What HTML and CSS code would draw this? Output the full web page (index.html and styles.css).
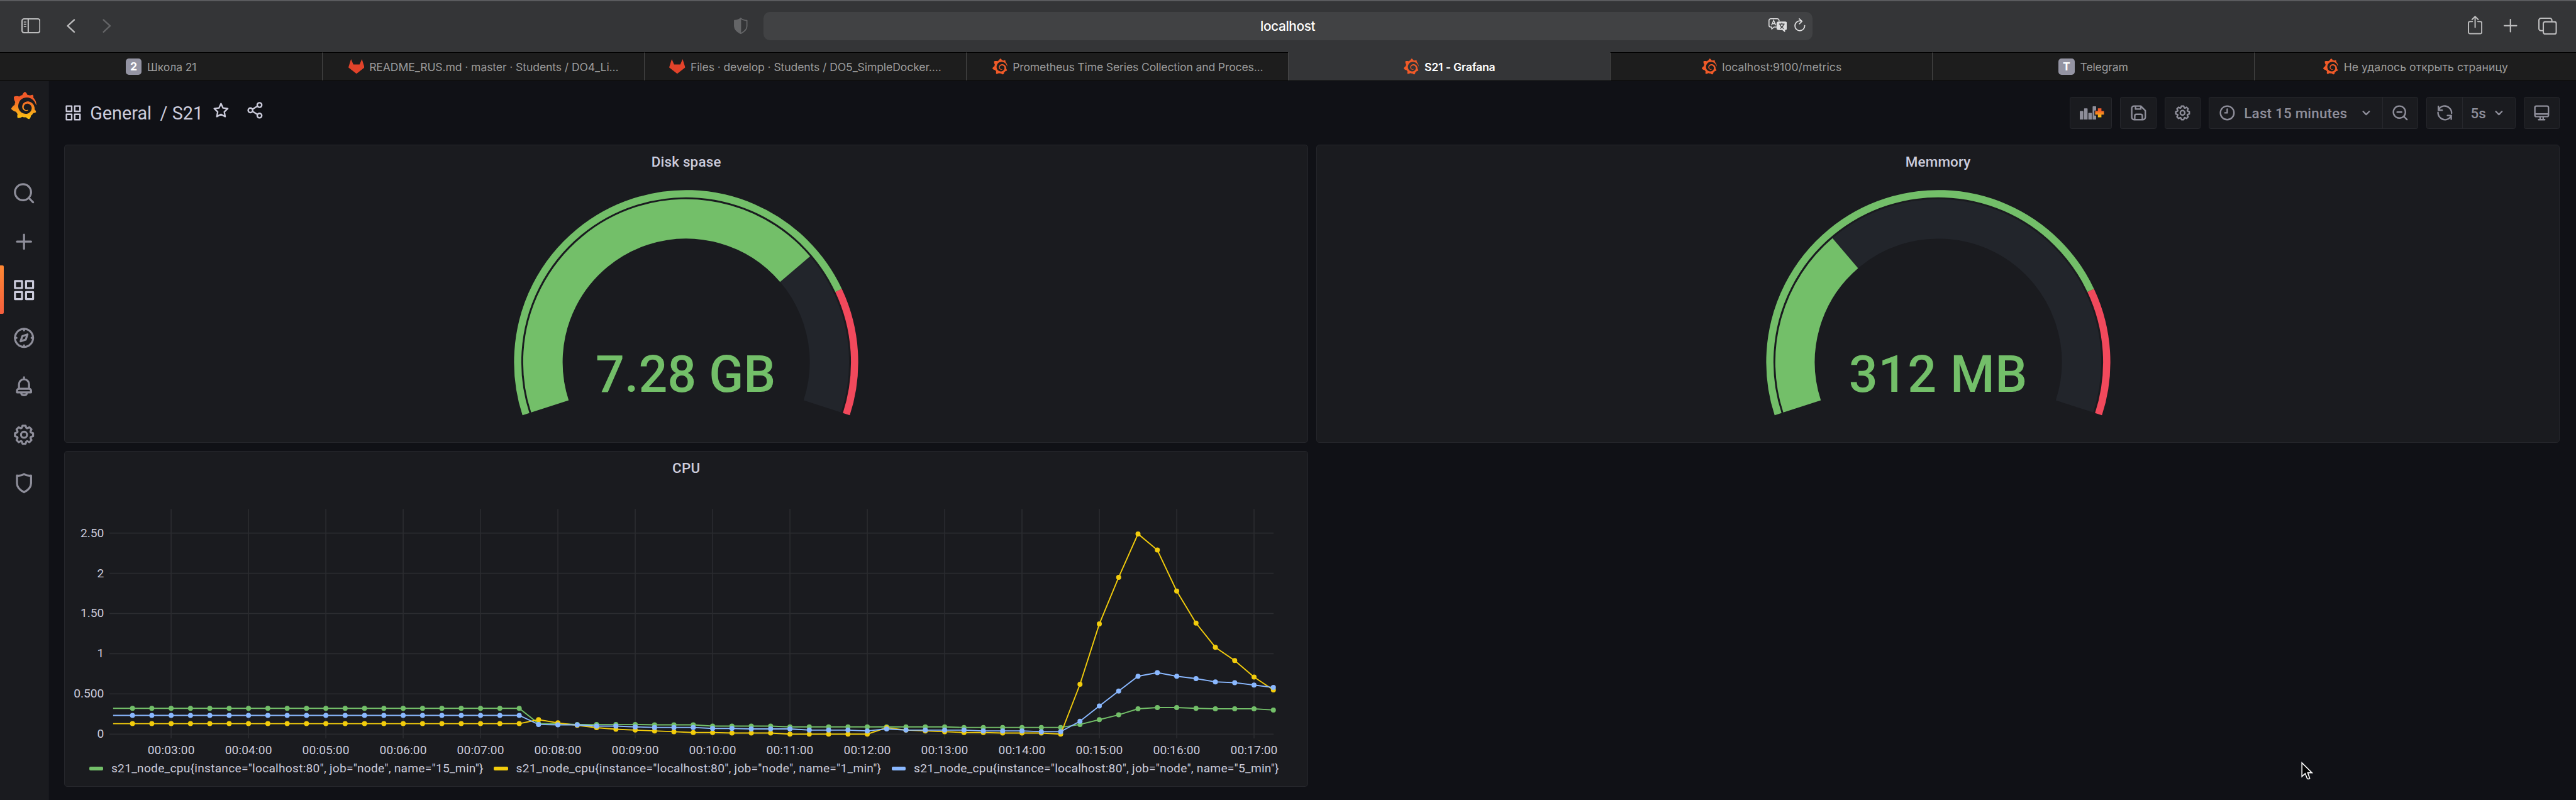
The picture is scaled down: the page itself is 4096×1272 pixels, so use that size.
FILE: index.html
```html
<!DOCTYPE html>
<html lang="ru">
<head>
<meta charset="utf-8">
<title>S21 - Grafana</title>
<link rel="stylesheet" href="styles.css">
</head>
<body>
<svg class="defs" aria-hidden="true">
  <defs>
    <linearGradient id="flame" x1="0" y1="1" x2="0" y2="0"><stop offset="0" stop-color="#fcc80f"/><stop offset=".25" stop-color="#f9a51c"/><stop offset=".75" stop-color="#f15a29"/><stop offset="1" stop-color="#f15a29"/></linearGradient>
    <symbol id="grafana" viewBox="0.95 0 22.1 24"><path d="M23.02 10.59a8.578 8.578 0 0 0-.862-3.034 8.911 8.911 0 0 0-1.789-2.445c.337-1.342-.413-2.505-.413-2.505-1.292-.08-2.113.4-2.416.62-.052-.02-.102-.044-.154-.064-.22-.089-.446-.172-.677-.247-.231-.073-.47-.14-.711-.197a9.867 9.867 0 0 0-.875-.161C14.557.753 12.94 0 12.94 0c-1.804 1.145-2.147 2.744-2.147 2.744l-.018.093c-.098.029-.2.057-.298.088-.138.042-.275.094-.413.143-.138.055-.275.107-.41.166a8.869 8.869 0 0 0-1.557.87l-.063-.029c-2.497-.955-4.716.195-4.716.195-.203 2.658.996 4.33 1.235 4.636a11.608 11.608 0 0 0-.607 2.635C1.636 12.677.953 15.014.953 15.014c1.926 2.214 4.171 2.351 4.171 2.351.003-.002.006-.002.006-.005.285.509.615.994.986 1.446.156.19.32.371.488.548-.704 2.009.099 3.68.099 3.68 2.144.08 3.553-.937 3.849-1.173a9.784 9.784 0 0 0 3.164.501h.08l.055-.003.107-.002.103-.005.003.002c1.01 1.44 2.788 1.646 2.788 1.646 1.264-1.332 1.337-2.653 1.337-2.94v-.058c0-.02-.003-.039-.003-.06.265-.187.52-.387.758-.6a7.875 7.875 0 0 0 1.415-1.7c1.43.083 2.437-.885 2.437-.885-.236-1.49-1.085-2.216-1.264-2.354l-.018-.013-.016-.013a.217.217 0 0 1-.031-.02c.008-.092.016-.18.02-.27.011-.162.016-.323.016-.48v-.253l-.005-.098-.008-.135a1.891 1.891 0 0 0-.01-.13c-.003-.042-.008-.083-.013-.125l-.016-.124-.018-.122a6.215 6.215 0 0 0-2.032-3.73 6.015 6.015 0 0 0-3.222-1.46 6.292 6.292 0 0 0-.85-.048l-.107.002h-.063l-.044.003-.104.008a4.777 4.777 0 0 0-3.335 1.695c-.332.4-.592.84-.768 1.297a4.594 4.594 0 0 0-.312 1.817l.003.091c.005.055.007.11.013.164a3.615 3.615 0 0 0 .698 1.82 3.53 3.53 0 0 0 1.827 1.282c.33.098.66.14.971.137.039 0 .078 0 .114-.002l.063-.003c.02 0 .041-.003.062-.003.034-.002.065-.007.099-.01.007 0 .018-.003.028-.003l.031-.005.06-.008a1.18 1.18 0 0 0 .112-.02c.036-.008.072-.013.109-.024a2.634 2.634 0 0 0 .914-.415c.028-.02.056-.041.085-.065a.248.248 0 0 0 .039-.35.244.244 0 0 0-.309-.06l-.078.042c-.09.044-.184.083-.283.116a2.476 2.476 0 0 1-.475.096c-.028.003-.054.006-.083.006l-.083.002c-.026 0-.054 0-.08-.002l-.102-.006h-.012l-.024.006c-.016-.003-.031-.003-.044-.006-.031-.002-.06-.007-.091-.01a2.59 2.59 0 0 1-.724-.213 2.557 2.557 0 0 1-.667-.438 2.52 2.52 0 0 1-.805-1.475 2.306 2.306 0 0 1-.029-.444l.006-.122v-.023l.002-.031c.003-.021.003-.04.005-.06a3.163 3.163 0 0 1 1.352-2.29 3.12 3.12 0 0 1 .937-.43 2.946 2.946 0 0 1 .776-.101h.06l.07.002.045.003h.026l.07.005a4.041 4.041 0 0 1 1.635.49 3.94 3.94 0 0 1 1.602 1.662 3.77 3.77 0 0 1 .397 1.414l.005.076.003.075c.002.026.002.05.002.075 0 .024.003.052 0 .07v.065l-.002.073-.008.174a6.195 6.195 0 0 1-.08.639 5.1 5.1 0 0 1-.267.927 5.31 5.31 0 0 1-.624 1.13 5.052 5.052 0 0 1-3.237 2.014 4.82 4.82 0 0 1-.649.066l-.039.003h-.287a6.607 6.607 0 0 1-1.716-.265 6.776 6.776 0 0 1-3.4-2.274 6.75 6.75 0 0 1-.746-1.15 6.616 6.616 0 0 1-.714-2.596l-.005-.083-.002-.02v-.056l-.003-.073v-.096l-.003-.104v-.07l.003-.163c.008-.22.026-.45.054-.678a8.707 8.707 0 0 1 .28-1.355c.128-.444.286-.872.473-1.277a7.04 7.04 0 0 1 1.456-2.1 5.925 5.925 0 0 1 .953-.763c.169-.111.343-.213.524-.306.089-.05.182-.091.273-.135.047-.02.093-.042.138-.062a7.177 7.177 0 0 1 .714-.267l.145-.045c.049-.015.098-.026.148-.041.098-.029.197-.052.296-.076.049-.013.1-.02.15-.033l.15-.032.151-.028.076-.013.075-.01.153-.024c.057-.01.114-.013.171-.023l.169-.021c.036-.003.073-.008.106-.01l.073-.008.036-.003.042-.002c.057-.003.114-.008.171-.01l.086-.006h.023l.037-.003.145-.007a7.999 7.999 0 0 1 1.708.125 7.917 7.917 0 0 1 2.048.68 8.253 8.253 0 0 1 1.672 1.09l.09.077.089.078c.06.052.114.107.171.159.057.052.112.106.166.16.052.055.107.107.159.164a8.671 8.671 0 0 1 1.41 1.978c.012.026.028.052.04.078l.04.078.075.156c.023.051.05.1.07.153l.065.15a8.848 8.848 0 0 1 .45 1.34.19.19 0 0 0 .201.142.186.186 0 0 0 .172-.184c.01-.246.002-.532-.024-.856z"/></symbol>
    <symbol id="gitlab" viewBox="0 0 32 29"><path d="M16 29 0 16.5 5.2 0 9.8 10.5h12.4L26.8 0 32 16.5z"/></symbol>
    <symbol id="apps" viewBox="0 0 24 24"><path d="M10,13H3a1,1,0,0,0-1,1v7a1,1,0,0,0,1,1h7a1,1,0,0,0,1-1V14A1,1,0,0,0,10,13ZM9,20H4V15H9ZM21,2H14a1,1,0,0,0-1,1v7a1,1,0,0,0,1,1h7a1,1,0,0,0,1-1V3A1,1,0,0,0,21,2ZM20,9H15V4h5Zm1,4H14a1,1,0,0,0-1,1v7a1,1,0,0,0,1,1h7a1,1,0,0,0,1-1V14A1,1,0,0,0,21,13Zm-1,7H15V15h5ZM10,2H3A1,1,0,0,0,2,3v7a1,1,0,0,0,1,1h7a1,1,0,0,0,1-1V3A1,1,0,0,0,10,2ZM9,9H4V4H9Z"/></symbol>
    <symbol id="cog" viewBox="0 0 24 24"><path d="M21.32,9.55l-1.89-.63.89-1.78A1,1,0,0,0,20.13,6L18,3.87a1,1,0,0,0-1.15-.19l-1.78.89-.63-1.89A1,1,0,0,0,13.5,2h-3a1,1,0,0,0-.95.68L8.92,4.57,7.14,3.68A1,1,0,0,0,6,3.87L3.87,6a1,1,0,0,0-.19,1.15l.89,1.78-1.89.63A1,1,0,0,0,2,10.5v3a1,1,0,0,0,.68.95l1.89.63-.89,1.78A1,1,0,0,0,3.87,18L6,20.13a1,1,0,0,0,1.15.19l1.78-.89.63,1.89a1,1,0,0,0,.95.68h3a1,1,0,0,0,.95-.68l.63-1.89,1.78.89A1,1,0,0,0,18,20.13L20.13,18a1,1,0,0,0,.19-1.15l-.89-1.78,1.89-.63A1,1,0,0,0,22,13.5v-3A1,1,0,0,0,21.32,9.55ZM20,12.78l-1.2.4A2,2,0,0,0,17.64,16l.57,1.14-1.1,1.1L16,17.64a2,2,0,0,0-2.79,1.16l-.4,1.2H11.22l-.4-1.2A2,2,0,0,0,8,17.64l-1.14.57-1.1-1.1L6.36,16A2,2,0,0,0,5.2,13.18L4,12.78V11.22l1.2-.4A2,2,0,0,0,6.36,8L5.79,6.89l1.1-1.1L8,6.36A2,2,0,0,0,10.82,5.2l.4-1.2h1.56l.4,1.2A2,2,0,0,0,16,6.36l1.14-.57,1.1,1.1L17.64,8a2,2,0,0,0,1.16,2.79l1.2.4ZM12,8a4,4,0,1,0,4,4A4,4,0,0,0,12,8Zm0,6a2,2,0,1,1,2-2A2,2,0,0,1,12,14Z"/></symbol>
    <symbol id="chevron" viewBox="0 0 24 24"><path class="line" d="M8 10.2 12 14.2 16 10.2"/></symbol>
  </defs>
</svg>

<header class="chrome">
  <div class="chrome-left">
    <svg class="ic-sidebar" viewBox="0 0 38 30"><g fill="none" stroke="currentColor" stroke-width="2.6"><rect x="1.3" y="1.3" width="35.4" height="27.4" rx="4"/><path d="M13.6 1v28"/><path stroke-width="2" d="M4.8 7.5h5M4.8 12h5M4.8 16.5h5"/></g></svg>
    <svg class="ic-back" viewBox="0 0 17 28"><path fill="none" stroke="currentColor" stroke-width="3" stroke-linecap="round" stroke-linejoin="round" d="M15 2 2 14 15 26"/></svg>
    <svg class="ic-forward" viewBox="0 0 17 28"><path fill="none" stroke="currentColor" stroke-width="3" stroke-linecap="round" stroke-linejoin="round" d="M2 2 15 14 2 26"/></svg>
  </div>
  <svg class="ic-privacy" viewBox="0 0 27 33"><path fill="none" stroke="currentColor" stroke-width="2.2" stroke-linejoin="round" d="M13.5 1.3C16.5 4 21 5.400 25.800 5.800V17C25.800 24 20 28.500 13.500 31.700 7 28.500 1.200 24 1.200 17V5.800C6 5.400 10.500 4 13.500 1.300z"/><path fill="currentColor" d="M14.200 1v31.500C7 29 1 24 1 17V5.800C6 5.400 11 4 14.200 1z"/></svg>
  <div class="url">
    <span class="url-text">localhost</span>
    <svg class="ic-translate" viewBox="0 0 37 28"><path fill="none" stroke="currentColor" stroke-width="2" stroke-linejoin="round" d="M16 17.500H11L6.500 21.500V17.500H4.500A3.500 3.500 0 0 1 1 14V4.500A3.500 3.500 0 0 1 4.500 1H17.500A3.500 3.500 0 0 1 21 4.500V6"/><path fill="none" stroke="currentColor" stroke-width="1.800" d="M6 14 10.300 4.200 14.600 14M7.500 11h5.600"/><rect x="16" y="6.500" width="21" height="17" rx="4" fill="currentColor"/><path fill="currentColor" d="M27 23h6v5z"/><path fill="none" stroke="#414244" stroke-width="1.700" d="M21 11.500h11M26.500 9v2.500M23 20.500C27 18.500 29.500 15.500 30 11.500M23 11.500C23.500 15.500 26 18.500 30.500 20.500"/></svg>
    <svg class="ic-reload" viewBox="0 0 22 26"><path fill="none" stroke="currentColor" stroke-width="2.200" stroke-linecap="round" stroke-linejoin="round" d="M20.700 14.500A9.700 9.700 0 1 1 11 5.300C12.500 5.300 13.700 5.500 15 6M10 1.200 15.300 6 10.300 11"/></svg>
  </div>
  <div class="chrome-right">
    <svg class="ic-share" viewBox="0 0 29 37"><path fill="none" stroke="currentColor" stroke-width="2.500" stroke-linecap="round" stroke-linejoin="round" d="M9 11.500H4.500A3 3 0 0 0 1.300 14.500V32.500A3 3 0 0 0 4.500 35.700H24.500A3 3 0 0 0 27.700 32.500V14.500A3 3 0 0 0 24.500 11.500H20M14.500 23V1.800M8.500 7.500 14.500 1.500 20.500 7.500"/></svg>
    <svg class="ic-plus" viewBox="0 0 27 27"><path fill="none" stroke="currentColor" stroke-width="2.800" stroke-linecap="round" d="M13.500 1.400v24.200M1.400 13.500h24.200"/></svg>
    <svg class="ic-tabs" viewBox="0 0 37 34"><g fill="none" stroke="currentColor" stroke-width="2.600"><rect x="10" y="8.300" width="25.700" height="24.400" rx="3.500"/><path d="M10 26H5.300A4 4 0 0 1 1.300 22V5.300A4 4 0 0 1 5.300 1.300H23A4 4 0 0 1 27 5.300V8"/></g></svg>
  </div>
</header>

<nav class="tabs">
  <div class="tab"><span class="badge">2</span><span class="tab-label">Школа 21</span></div>
  <div class="tab"><svg class="fav gl"><use href="#gitlab"/></svg><span class="tab-label long">README_RUS.md · master · Students / DO4_Li...</span></div>
  <div class="tab"><svg class="fav gl"><use href="#gitlab"/></svg><span class="tab-label long">Files · develop · Students / DO5_SimpleDocker....</span></div>
  <div class="tab"><svg class="fav"><use href="#grafana"/></svg><span class="tab-label">Prometheus Time Series Collection and Proces...</span></div>
  <div class="tab active"><svg class="fav"><use href="#grafana"/></svg><span class="tab-label">S21 - Grafana</span></div>
  <div class="tab"><svg class="fav"><use href="#grafana"/></svg><span class="tab-label loose">localhost:9100/metrics</span></div>
  <div class="tab"><span class="badge">T</span><span class="tab-label">Telegram</span></div>
  <div class="tab"><svg class="fav"><use href="#grafana"/></svg><span class="tab-label loose">Не удалось открыть страницу</span></div>
</nav>

<div class="app">
  <aside class="sidebar">
    <svg class="logo" viewBox="0.95 0 22.1 24"><use href="#grafana" x="0.95" y="0" width="22.1" height="24" fill="url(#flame)"/></svg>
    <div class="side-item"><svg class="ico"  viewBox="0 0 24 24"><path fill="currentColor" d="M21.710,20.290,18,16.610A9,9,0,1,0,16.610,18l3.680,3.680a1,1,0,0,0,1.420,0A1,1,0,0,0,21.710,20.290ZM11,18a7,7,0,1,1,7-7A7,7,0,0,1,11,18Z"/></svg></div>
    <div class="side-item"><svg class="ico" viewBox="0 0 24 24"><path class="line" d="M12 5v14M5 12h14"/></svg></div>
    <div class="side-item current"><svg class="ico"><use href="#apps"/></svg></div>
    <div class="side-item"><svg class="ico" viewBox="0 0 24 24"><circle class="line" cx="12" cy="12" r="9"/><path class="line" d="M12 3v1.500M12 19.500V21M3 12h1.500M19.500 12H21M15.400 8.600 13.700 13.700 8.600 15.400 10.300 10.300z"/></svg></div>
    <div class="side-item"><svg class="ico" viewBox="0 0 24 24"><path class="line" d="M12 3v1M7 14V10a5 5 0 0 1 10 0v4M5 18v-1.500A2 2 0 0 1 7 14.500h10a2 2 0 0 1 2 2V18zM9.200 19.200C10 21.500 14 21.500 14.800 19.200"/></svg></div>
    <div class="side-item"><svg class="ico"><use href="#cog"/></svg></div>
    <div class="side-item"><svg class="ico" viewBox="0 0 24 24"><path class="line" d="M12 3C10 4.500 7.500 4.900 5 4.500V12C5 16 8 19 12 21 16 19 19 16 19 12V4.500C16.500 4.900 14 4.500 12 3z"/></svg></div>
  </aside>

  <main class="main">
    <div class="toolbar">
      <div class="crumbs">
        <svg class="ico-s"><use href="#apps"/></svg>
        <span class="folder">General</span><span class="dash-name">/ S21</span>
        <svg class="ico-s raised star" viewBox="0 0 24 24"><path class="line" d="M12 3.200 14.700 8.900 20.900 9.700 16.400 14.100 17.500 20.300 12 17.300 6.500 20.300 7.600 14.100 3.100 9.700 9.300 8.900z"/></svg>
        <svg class="ico-s raised share" viewBox="0 0 24 24"><circle class="line" cx="18" cy="5" r="3"/><circle class="line" cx="18" cy="19" r="3"/><circle class="line" cx="6" cy="12" r="3"/><path class="line" d="M8.700 10.600 15.300 6.500M8.700 13.400 15.300 17.500"/></svg>
      </div>
      <div class="actions">
        <div class="btn add"><svg class="ic-add" viewBox="0 0 48 27"><path fill="currentColor" d="M0 10.500a1 1 0 0 1 1-1h5a1 1 0 0 1 1 1V26.500H0zM8.500 5a1 1 0 0 1 1-1h5a1 1 0 0 1 1 1V26.500h-7zM17 14a1 1 0 0 1 1-1h5a1 1 0 0 1 1 1v12.500h-7zM25.500 1a1 1 0 0 1 1-1h5a1 1 0 0 1 1 1V8.500h-3.500v10h3.500v8h-7z"/><path fill="url(#flame)" d="M36 4h7v5.500h5v7h-5V22h-7v-5.500h-5.500v-7H36z"/></svg></div>
        <div class="btn"><svg class="ico-s" viewBox="0 0 24 24"><path class="line" d="M6 3h9L21 9v9a3 3 0 0 1-3 3H6a3 3 0 0 1-3-3V6a3 3 0 0 1 3-3zM8 3v4h7V3.500M7 21v-5a2 2 0 0 1 2-2h6a2 2 0 0 1 2 2v5"/></svg></div>
        <div class="btn"><svg class="ico-s"><use href="#cog"/></svg></div>
        <div class="group">
          <div class="seg time"><svg class="ico-s" viewBox="0 0 24 24"><circle class="line" cx="12" cy="12" r="9"/><path class="line" d="M12 7v5H9"/></svg><span class="seg-text range">Last 15 minutes</span><svg class="ico-s"><use href="#chevron"/></svg></div>
          <div class="seg zoom"><svg class="ico-s" viewBox="0 0 24 24"><circle class="line" cx="11" cy="11" r="8"/><path class="line" d="M17 17l4 4M8 11h6"/></svg></div>
        </div>
        <div class="group">
          <div class="seg refresh"><svg class="ico-s" viewBox="0 0 24 24"><path class="line" d="M3.500 8.500C6 2.500 13.500 1 18 5.500A9 9 0 0 1 21 12.500M3.500 3.500v5h5M20.500 15.500C18 21.500 10.500 23 6 18.500A9 9 0 0 1 3 11.500M20.500 20.500v-5h-5"/></svg></div>
          <div class="seg interval"><span class="seg-text">5s</span><svg class="ico-s"><use href="#chevron"/></svg></div>
        </div>
        <div class="btn"><svg class="ico-s" viewBox="0 0 24 24"><path class="line" d="M5 3h14a2 2 0 0 1 2 2v10a2 2 0 0 1-2 2H5a2 2 0 0 1-2-2V5a2 2 0 0 1 2-2zM3 13.500h18M10 17v3M14 17v3M8 21h8"/></svg></div>
      </div>
    </div>

    <div class="panels">
      <section class="panel">
        <h2 class="panel-title">Disk spase</h2>
        <svg class="gauge" viewBox="-350 -351 700 470">
          <circle class="g-track" r="284.700" pathLength="360" stroke-dasharray="216 144" transform="rotate(162)"/>
          <circle class="g-fill" r="284.700" pathLength="360" stroke-dasharray="157.500 202.500" transform="rotate(162)"/>
          <circle class="g-ok" r="334.800" pathLength="360" stroke-dasharray="172.800 187.200" transform="rotate(162)"/>
          <circle class="g-bad" r="334.800" pathLength="360" stroke-dasharray="43.200 316.800" transform="rotate(334.800)"/>
          <text class="g-value" x="-1" y="58.500">7.28 GB</text>
        </svg>
      </section>
      <section class="panel">
        <h2 class="panel-title">Memmory</h2>
        <svg class="gauge" viewBox="-350 -351 700 470">
          <circle class="g-track" r="284.700" pathLength="360" stroke-dasharray="216 144" transform="rotate(162)"/>
          <circle class="g-fill" r="284.700" pathLength="360" stroke-dasharray="67.500 292.500" transform="rotate(162)"/>
          <circle class="g-ok" r="334.800" pathLength="360" stroke-dasharray="172.800 187.200" transform="rotate(162)"/>
          <circle class="g-bad" r="334.800" pathLength="360" stroke-dasharray="43.200 316.800" transform="rotate(334.800)"/>
          <text class="g-value wide" x="0" y="58.500">312 MB</text>
        </svg>
      </section>
      <section class="panel cpu">
        <h2 class="panel-title">CPU</h2>
        <svg class="chart" id="cpu-chart" viewBox="130 1000 2468 510"></svg>
        <div class="legend">
          <span class="key green"></span><span class="legend-label">s21_node_cpu{instance="localhost:80", job="node", name="15_min"}</span>
          <span class="key yellow"></span><span class="legend-label">s21_node_cpu{instance="localhost:80", job="node", name="1_min"}</span>
          <span class="key blue"></span><span class="legend-label">s21_node_cpu{instance="localhost:80", job="node", name="5_min"}</span>
        </div>
      </section>
    </div>
  </main>
</div>

<svg class="pointer" viewBox="0 0 26 38"><path fill="#000" stroke="#fff" stroke-width="2" stroke-linejoin="miter" d="M1.500 2.500V29.500L8 23.500 12 33.500Q14.500 35.500 17 33.200L13 22H21.500z"/></svg>
<script src="chart.js"></script>
</body>
</html>
```
FILE: styles.css
```css
* { box-sizing: border-box; }

body {
  margin: 0;
  width: 4096px;
  height: 1272px;
  overflow: hidden;
  position: relative;
  background: #101116;
  color: #ccccdc;
  font-family: Roboto, "Liberation Sans", sans-serif;
  display: flex;
  flex-direction: column;
}

svg { display: block; flex: none; }
.defs { position: absolute; width: 0; height: 0; }
.line { fill: none; stroke: currentColor; stroke-width: 2; stroke-linecap: round; stroke-linejoin: round; }

/* browser chrome */
.chrome {
  height: 83px;
  flex: none;
  display: flex;
  align-items: center;
  padding-bottom: 2.500px;
  background: #343537;
  border-top: 2px solid #5a5b5e;
  color: #bcbcbd;
  font-family: Inter, "Liberation Sans", sans-serif;
}
.chrome-left { width: 1167px; padding-left: 34px; display: flex; align-items: center; }
.ic-sidebar { width: 30.400px; height: 24px; }
.ic-back { width: 13.600px; height: 22.400px; margin-left: 42px; }
.ic-forward { width: 13.600px; height: 22.400px; margin-left: 43px; color: #636466; }
.ic-privacy { width: 21.600px; height: 26.400px; color: #646567; }
.url {
  width: 1667.200px;
  height: 44.800px;
  margin-left: 25.800px;
  padding: 0 11px 0 30px;
  display: flex;
  align-items: center;
  border-radius: 10px;
  background: #414244;
  color: #dededf;
}
.url-text { flex: 1; padding-left: 39px; text-align: center; font-size: 20.800px; font-weight: 500; letter-spacing: -0.350px; color: #fff; }
.ic-translate { width: 29.600px; height: 22.400px; margin-top: -3px; }
.ic-reload { width: 17.600px; height: 20.800px; margin-left: 11.500px; margin-top: -3px; }
.chrome-right { margin-left: auto; padding-right: 30px; display: flex; align-items: center; }
.ic-share { width: 23.200px; height: 29.600px; margin-top: -3px; }
.ic-plus { width: 21.600px; height: 21.600px; margin-left: 34px; }
.ic-tabs { width: 29.600px; height: 27.200px; margin-left: 33.500px; }

.tabs { height: 46px; flex: none; display: flex; border-bottom: 1px solid #000; font-family: Inter, "Liberation Sans", sans-serif; }
.tab {
  width: 512px;
  display: flex;
  align-items: center;
  justify-content: center;
  border-top: 1px solid #000;
  border-left: 1.600px solid #464646;
  background: #1d1d1d;
  color: #9b9b9b;
  font-size: 17.600px;
}
.tab:first-child { border-left: 0; }
.tab.active { background: #343537; border-top-color: #343537; color: #fff; font-weight: 600; }
.tab-label { white-space: nowrap; letter-spacing: -0.150px; }
.tab-label.long { letter-spacing: -0.110px; }
.tab-label.loose { letter-spacing: 0.050px; }
.fav { width: 25.600px; height: 25.600px; margin-right: 8px; fill: #f05a28; }
.fav.gl { height: 23.200px; fill: #e2432a; }
.badge { width: 25.600px; height: 25.600px; margin-right: 8.800px; border-radius: 5px; background: #9494a3; color: #fff; font-weight: 700; line-height: 25.600px; text-align: center; }

/* grafana shell */
.app { flex: 1; display: flex; min-height: 0; }
.sidebar { width: 76.800px; flex: none; background: #1a1b1f; border-right: 1.600px solid #26272c; color: #8e8e9a; }
.logo { width: 41.600px; height: 43.600px; margin: 17.400px 0 78.800px 17.200px; }
.side-item { height: 76.800px; padding-left: 19.200px; display: flex; align-items: center; }
.side-item.current { padding-left: 0; color: #ccccdc; }
.side-item.current::before { content: ""; width: 6.400px; height: 76.800px; margin-right: 12.800px; border-radius: 0 2px 2px 0; background: linear-gradient(#ff8833, #f55f3e); }
.ico { width: 38.400px; height: 38.400px; fill: currentColor; }
.ico-s { width: 28.800px; height: 28.800px; fill: currentColor; }

.main { flex: 1; padding: 0 25.600px; }
.toolbar { height: 101.400px; display: flex; align-items: center; justify-content: space-between; }
.crumbs { display: flex; align-items: center; font-size: 28.800px; white-space: nowrap; }
.folder { margin-left: 12px; }
.dash-name { margin-left: 13.500px; }
.raised { margin-top: -8px; }
.star { margin-left: 13.500px; }
.share { margin-left: 25.600px; }

.actions { display: flex; gap: 12.800px; color: #8e8e9a; }
.btn, .group { height: 51.200px; border: 1.600px solid #26272c; border-radius: 3.200px; background: #1a1b1f; display: flex; align-items: center; }
.btn { width: 57.600px; justify-content: center; }
.btn.add { width: 67.200px; }
.ic-add { width: 38.400px; height: 21.600px; margin-left: 3px; }
.seg { height: 100%; display: flex; align-items: center; }
.seg + .seg { border-left: 1.600px solid #26272c; }
.seg-text { font-size: 22.400px; font-weight: 500; }
.time { width: 275.200px; padding-left: 14px; }
.range { width: 179.500px; margin-left: 12.500px; letter-spacing: 0.200px; white-space: nowrap; }
.zoom { width: 56px; justify-content: center; }
.refresh { width: 56px; justify-content: center; }
.interval { width: 84px; padding-left: 12.500px; gap: 6.500px; }

.panels { display: grid; grid-template-columns: 1fr 1fr; grid-template-rows: 473.600px 534.400px; gap: 12.800px; }
.panel { border: 1.600px solid #26272c; border-radius: 4.800px; background: #1a1b1f; overflow: hidden; }
.panel-title { margin: 0; height: 51.200px; line-height: 52.800px; text-align: center; font-size: 22.400px; font-weight: 500; letter-spacing: 0.200px; }

.gauge { width: 560px; height: 376px; margin: 12.800px auto 0; }
.gauge circle { fill: none; }
.g-track { stroke: #22252b; stroke-width: 78.400; }
.g-fill { stroke: #73bf69; stroke-width: 78.400; }
.g-ok { stroke: #73bf69; stroke-width: 14.400; }
.g-bad { stroke: #f2495c; stroke-width: 14.400; }
.g-value { font-size: 101px; font-weight: 500; fill: #73bf69; text-anchor: middle; }
.g-value.wide { letter-spacing: 1px; }

.chart { width: 1974.400px; height: 408px; margin-top: 30.400px; }
.grid { stroke: #2b2c30; stroke-width: 2; }
.axis { font-size: 24px; fill: #ccccdc; }
.axis.y { text-anchor: end; }
.axis.x { text-anchor: middle; letter-spacing: 0.150px; }
.series { fill: none; stroke-width: 2.400; }
.legend { height: 24px; margin-top: 2.400px; padding-left: 38.400px; display: flex; align-items: center; font-size: 19.200px; letter-spacing: 0.240px; white-space: nowrap; }
.key { width: 22.400px; height: 6.400px; margin-right: 12.800px; border-radius: 2px; }
.legend-label { margin-right: 16.500px; }
.green { background: #73bf69; }
.yellow { background: #f2cc0c; }
.blue { background: #8ab8ff; }

.pointer { position: absolute; left: 3659.400px; top: 1211px; width: 20.800px; height: 30.400px; }
```
FILE: chart.js
```js
(function () {
  var svg = document.getElementById('cpu-chart');
  var NS = 'http://www.w3.org/2000/svg';
  var X0 = 226.1, STEP = 38.435, Y0 = 1460.3, UNIT = 159.8;

  function add(name, attrs, text) {
    var el = document.createElementNS(NS, name);
    Object.keys(attrs).forEach(function (k) { el.setAttribute(k, attrs[k]); });
    if (text) el.textContent = text;
    svg.appendChild(el);
  }
  function repeat(v, n) { return Array(n).fill(v); }

  ['0', '0.500', '1', '1.50', '2', '2.50'].forEach(function (label, i) {
    var y = Y0 - i * UNIT / 2;
    add('line', { 'class': 'grid', x1: 218.7, x2: 2532.6, y1: y, y2: y });
    add('text', { 'class': 'axis y', x: 208, y: y + 7.500 }, label);
  });
  for (var m = 3; m <= 17; m++) {
    var x = X0 + (m - 2.25) * 4 * STEP;
    add('line', { 'class': 'grid', x1: x, x2: x, y1: 1012.7, y2: 1468.8 });
    add('text', { 'class': 'axis x', x: x, y: 1500 }, '00:' + (m < 10 ? '0' : '') + m + ':00');
  }

  // One sample every 15 s, 00:02:15 to 00:17:15
  var series = [
    { color: '#73bf69', data: repeat(.32, 22).concat([.13, .13, .12, .12, .12, .12, .115, .115, .115], repeat(.10, 4), repeat(.09, 9), repeat(.083, 6), [.12, .18, .24, .315, .33, .33, .32, .315, .315, .315, .30]) },
    { color: '#f2cc0c', data: repeat(.13, 22).concat([.18, .14, .11, .08, .06, .05, .04, .03, .02, .02, .013, .013, .013, 0, 0, 0, 0, 0, .08, .05, .04, .03, .02, .02, .013, .013, .013, 0, .62, 1.37, 1.95, 2.49, 2.29, 1.78, 1.38, 1.08, .915, .71, .55]) },
    { color: '#8ab8ff', data: repeat(.233, 22).concat([.12, .115, .115, .10, .10, .09, .083, .083, .083, .07, .07, .065, .065, .065, .05, .05, .05, .04, .065, .05, .05, .05, .05, .04, .04, .04, .03, .03, .16, .35, .535, .72, .765, .72, .69, .65, .64, .61, .58]) }
  ];
  series.forEach(function (s) {
    var pts = s.data.map(function (v, i) { return [X0 + i * STEP, Y0 - v * UNIT]; });
    add('polyline', { 'class': 'series', stroke: s.color, points: pts.map(function (p) { return p.join(','); }).join(' ') });
    pts.slice(1).forEach(function (p) { add('circle', { cx: p[0], cy: p[1], r: 5, fill: s.color }); });
  });
})();
```
